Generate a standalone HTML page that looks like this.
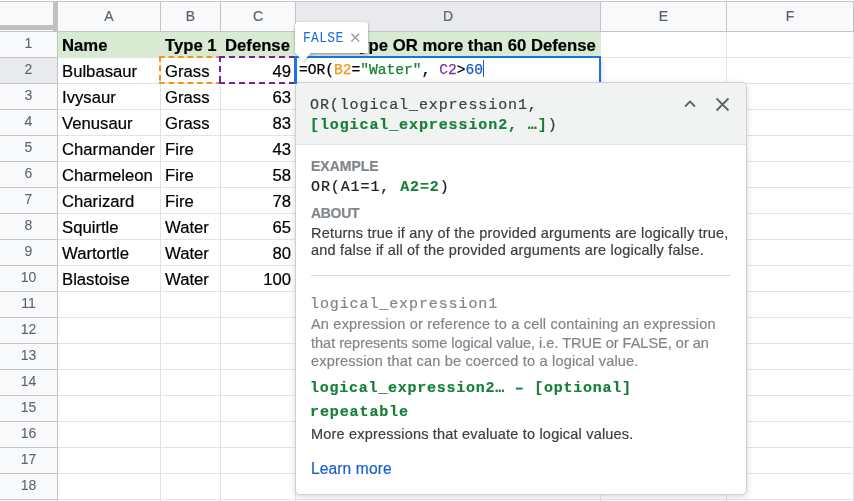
<!DOCTYPE html>
<html><head><meta charset="utf-8">
<style>
*{margin:0;padding:0;box-sizing:border-box}
html,body{width:854px;height:501px;overflow:hidden;background:#fff;font-family:"Liberation Sans",sans-serif}
body{will-change:transform;-webkit-text-stroke:0.2px}
div,span{position:absolute}
.ch{top:2px;height:29px;line-height:29px;text-align:center;font-size:14px;color:#5f6368}
.rn{left:0;width:53px;height:25px;line-height:23px;text-align:center;font-size:14px;color:#5f6368;-webkit-text-stroke:0.05px}
.c{height:25px;font-size:16.7px;color:#000;white-space:nowrap;line-height:28px;padding-left:4px}
.r{text-align:right;padding-left:0;padding-right:4px}
.b{font-weight:bold}
.mono{font-family:"Liberation Mono",monospace}
.pp{left:15px;white-space:nowrap}
</style></head><body>

<div style="left:0;top:0;width:854px;height:1px;background:#fff"></div>
<div style="left:0;top:1px;width:854px;height:1px;background:#c4c4c4"></div>
<div style="left:0;top:2px;width:854px;height:29px;background:#f8f9fa"></div>
<div style="left:0;top:31px;width:854px;height:1px;background:#c4c4c4"></div>
<div style="left:0;top:32px;width:57px;height:469px;background:#f8f9fa"></div>
<div style="left:296px;top:2px;width:304px;height:29px;background:#e8eaed"></div>
<div style="left:0;top:58px;width:57px;height:25px;background:#e8eaed"></div>
<div style="left:58px;top:32px;width:542px;height:25px;background:#d9ead3"></div>
<div style="left:58px;top:57px;width:796px;height:1px;background:#e2e3e3"></div>
<div style="left:0;top:57px;width:57px;height:1px;background:#c4c4c4"></div>
<div style="left:58px;top:83px;width:796px;height:1px;background:#e2e3e3"></div>
<div style="left:0;top:83px;width:57px;height:1px;background:#c4c4c4"></div>
<div style="left:58px;top:109px;width:796px;height:1px;background:#e2e3e3"></div>
<div style="left:0;top:109px;width:57px;height:1px;background:#c4c4c4"></div>
<div style="left:58px;top:135px;width:796px;height:1px;background:#e2e3e3"></div>
<div style="left:0;top:135px;width:57px;height:1px;background:#c4c4c4"></div>
<div style="left:58px;top:161px;width:796px;height:1px;background:#e2e3e3"></div>
<div style="left:0;top:161px;width:57px;height:1px;background:#c4c4c4"></div>
<div style="left:58px;top:187px;width:796px;height:1px;background:#e2e3e3"></div>
<div style="left:0;top:187px;width:57px;height:1px;background:#c4c4c4"></div>
<div style="left:58px;top:213px;width:796px;height:1px;background:#e2e3e3"></div>
<div style="left:0;top:213px;width:57px;height:1px;background:#c4c4c4"></div>
<div style="left:58px;top:239px;width:796px;height:1px;background:#e2e3e3"></div>
<div style="left:0;top:239px;width:57px;height:1px;background:#c4c4c4"></div>
<div style="left:58px;top:265px;width:796px;height:1px;background:#e2e3e3"></div>
<div style="left:0;top:265px;width:57px;height:1px;background:#c4c4c4"></div>
<div style="left:58px;top:291px;width:796px;height:1px;background:#e2e3e3"></div>
<div style="left:0;top:291px;width:57px;height:1px;background:#c4c4c4"></div>
<div style="left:58px;top:317px;width:796px;height:1px;background:#e2e3e3"></div>
<div style="left:0;top:317px;width:57px;height:1px;background:#c4c4c4"></div>
<div style="left:58px;top:343px;width:796px;height:1px;background:#e2e3e3"></div>
<div style="left:0;top:343px;width:57px;height:1px;background:#c4c4c4"></div>
<div style="left:58px;top:369px;width:796px;height:1px;background:#e2e3e3"></div>
<div style="left:0;top:369px;width:57px;height:1px;background:#c4c4c4"></div>
<div style="left:58px;top:395px;width:796px;height:1px;background:#e2e3e3"></div>
<div style="left:0;top:395px;width:57px;height:1px;background:#c4c4c4"></div>
<div style="left:58px;top:421px;width:796px;height:1px;background:#e2e3e3"></div>
<div style="left:0;top:421px;width:57px;height:1px;background:#c4c4c4"></div>
<div style="left:58px;top:447px;width:796px;height:1px;background:#e2e3e3"></div>
<div style="left:0;top:447px;width:57px;height:1px;background:#c4c4c4"></div>
<div style="left:58px;top:473px;width:796px;height:1px;background:#e2e3e3"></div>
<div style="left:0;top:473px;width:57px;height:1px;background:#c4c4c4"></div>
<div style="left:58px;top:499px;width:796px;height:1px;background:#e2e3e3"></div>
<div style="left:0;top:499px;width:57px;height:1px;background:#c4c4c4"></div>
<div style="left:160px;top:32px;width:1px;height:469px;background:#e2e3e3"></div>
<div style="left:160px;top:2px;width:1px;height:29px;background:#c4c4c4"></div>
<div style="left:220px;top:32px;width:1px;height:469px;background:#e2e3e3"></div>
<div style="left:220px;top:2px;width:1px;height:29px;background:#c4c4c4"></div>
<div style="left:295px;top:32px;width:1px;height:469px;background:#e2e3e3"></div>
<div style="left:295px;top:2px;width:1px;height:29px;background:#c4c4c4"></div>
<div style="left:600px;top:32px;width:1px;height:469px;background:#e2e3e3"></div>
<div style="left:600px;top:2px;width:1px;height:29px;background:#c4c4c4"></div>
<div style="left:726px;top:32px;width:1px;height:469px;background:#e2e3e3"></div>
<div style="left:726px;top:2px;width:1px;height:29px;background:#c4c4c4"></div>
<div style="left:853px;top:32px;width:1px;height:469px;background:#e2e3e3"></div>
<div style="left:853px;top:2px;width:1px;height:29px;background:#c4c4c4"></div>
<div style="left:57px;top:2px;width:1px;height:499px;background:#c4c4c4"></div>
<div style="left:53px;top:2px;width:4px;height:29px;background:#c0c0c0"></div>
<div style="left:0;top:25px;width:57px;height:5px;background:#c0c0c0"></div>
<div class="ch" style="left:58px;width:102px">A</div>
<div class="ch" style="left:161px;width:59px">B</div>
<div class="ch" style="left:221px;width:74px">C</div>
<div class="ch" style="left:296px;width:304px">D</div>
<div class="ch" style="left:601px;width:125px">E</div>
<div class="ch" style="left:727px;width:126px">F</div>
<div class="rn" style="top:32px;left:2px">1</div>
<div class="rn" style="top:58px;left:2px">2</div>
<div class="rn" style="top:84px;left:2px">3</div>
<div class="rn" style="top:110px;left:2px">4</div>
<div class="rn" style="top:136px;left:2px">5</div>
<div class="rn" style="top:162px;left:2px">6</div>
<div class="rn" style="top:188px;left:2px">7</div>
<div class="rn" style="top:214px;left:2px">8</div>
<div class="rn" style="top:240px;left:2px">9</div>
<div class="rn" style="top:266px;left:2px">10</div>
<div class="rn" style="top:292px;left:2px">11</div>
<div class="rn" style="top:318px;left:2px">12</div>
<div class="rn" style="top:344px;left:2px">13</div>
<div class="rn" style="top:370px;left:2px">14</div>
<div class="rn" style="top:396px;left:2px">15</div>
<div class="rn" style="top:422px;left:2px">16</div>
<div class="rn" style="top:448px;left:2px">17</div>
<div class="rn" style="top:474px;left:2px">18</div>
<div class="c b" style="left:58px;top:32px">Name</div>
<div class="c b" style="left:161px;top:32px">Type 1</div>
<div class="c b" style="left:221px;top:32px">Defense</div>
<div class="c b" style="left:296px;top:32px">Water Type OR more than 60 Defense</div>
<div class="c" style="left:58px;top:58px">Bulbasaur</div>
<div class="c" style="left:161px;top:58px">Grass</div>
<div class="c r" style="left:221px;width:74px;top:58px">49</div>
<div class="c" style="left:58px;top:84px">Ivysaur</div>
<div class="c" style="left:161px;top:84px">Grass</div>
<div class="c r" style="left:221px;width:74px;top:84px">63</div>
<div class="c" style="left:58px;top:110px">Venusaur</div>
<div class="c" style="left:161px;top:110px">Grass</div>
<div class="c r" style="left:221px;width:74px;top:110px">83</div>
<div class="c" style="left:58px;top:136px">Charmander</div>
<div class="c" style="left:161px;top:136px">Fire</div>
<div class="c r" style="left:221px;width:74px;top:136px">43</div>
<div class="c" style="left:58px;top:162px">Charmeleon</div>
<div class="c" style="left:161px;top:162px">Fire</div>
<div class="c r" style="left:221px;width:74px;top:162px">58</div>
<div class="c" style="left:58px;top:188px">Charizard</div>
<div class="c" style="left:161px;top:188px">Fire</div>
<div class="c r" style="left:221px;width:74px;top:188px">78</div>
<div class="c" style="left:58px;top:214px">Squirtle</div>
<div class="c" style="left:161px;top:214px">Water</div>
<div class="c r" style="left:221px;width:74px;top:214px">65</div>
<div class="c" style="left:58px;top:240px">Wartortle</div>
<div class="c" style="left:161px;top:240px">Water</div>
<div class="c r" style="left:221px;width:74px;top:240px">80</div>
<div class="c" style="left:58px;top:266px">Blastoise</div>
<div class="c" style="left:161px;top:266px">Water</div>
<div class="c r" style="left:221px;width:74px;top:266px">100</div>
<svg style="position:absolute;left:0;top:0" width="854" height="501">
<g fill="none" stroke="#f6931a" stroke-width="2" stroke-dasharray="5.7 3.8"><path d="M159 57H219M159 83H219M160 56V84"/></g>
<g fill="none" stroke="#76219c" stroke-width="2" stroke-dasharray="6 4"><path d="M219 57H294M219 83H294M220 56V84"/></g>
</svg>
<div style="left:297px;top:58px;width:302px;height:24px;background:#fff;box-shadow:2px 2px 5px rgba(0,0,0,0.2)"></div>
<div style="left:294px;top:56px;width:3px;height:28px;background:#1a73e8"></div>
<div style="left:294px;top:56px;width:307px;height:2px;background:#1a73e8"></div>
<div style="left:599px;top:56px;width:2px;height:26px;background:#1a73e8"></div>
<div style="left:297px;top:82px;width:304px;height:1px;background:#c8c8c8"></div>
<div class="mono" style="left:299px;top:58px;height:24px;line-height:24px;font-size:14.6px;color:#000;white-space:nowrap;-webkit-text-stroke:0.25px">=OR(<span style="position:static;color:#f39416">B2</span>=<span style="position:static;color:#15822d">"Water"</span>, <span style="position:static;color:#7f2ea6">C2</span>&gt;<span style="position:static;color:#1659cc">60</span></div>
<div style="left:483px;top:60px;width:1px;height:17px;background:#1a5fd0"></div>
<div style="left:295px;top:22px;width:73px;height:31px;background:#fff;border-radius:3px;box-shadow:0 1px 2px rgba(60,64,67,0.35),0 1px 3px 1px rgba(60,64,67,0.15)"></div>
<svg style="position:absolute;left:0;top:0" width="854" height="501"><path d="M294.5 52 L312 52 L303 61.5 Z" fill="#fff" style="filter:drop-shadow(1px 1px 1px rgba(0,0,0,0.2))"/></svg>
<div style="left:295px;top:49px;width:73px;height:4px;background:#fff"></div>
<div class="mono" style="left:303px;top:28px;height:22px;line-height:22px;font-size:13px;letter-spacing:0.3px;color:#1a6ae0;-webkit-text-stroke:0;transform:scaleY(1.12)">FALSE</div>
<div style="left:348.5px;top:27px;height:22px;line-height:22px;font-size:15px;color:#9aa0a6;-webkit-text-stroke:0">&#x2715;</div>
<div style="left:295px;top:82px;width:452px;height:413px;background:#fff;border:1px solid #cdcfd1;border-radius:5px;box-shadow:0 2px 6px rgba(60,64,67,0.2);overflow:hidden">
<div style="left:0;top:0;width:452px;height:62px;background:#f1f3f3;border-bottom:1px solid #e3e5e6"></div>
</div>
<div style="left:311px;top:275px;width:420px;height:1px;background:#dadce0"></div>
<div class="" style="left:310px;top:96px;line-height:20px;white-space:nowrap;font-family:'Liberation Mono',monospace;font-size:15px;letter-spacing:0.9px;color:#3c4043">OR(logical_expression1,</div>
<div class="" style="left:310px;top:116px;line-height:20px;white-space:nowrap;font-family:'Liberation Mono',monospace;font-size:15px;letter-spacing:0.9px;color:#3c4043"><span style="position:static;color:#188038;font-weight:bold">[logical_expression2, …]</span>)</div>
<div class="" style="left:311px;top:156px;line-height:20px;white-space:nowrap;font-size:14px;font-weight:bold;letter-spacing:0px;color:#80868b">EXAMPLE</div>
<div class="" style="left:311px;top:178px;line-height:20px;white-space:nowrap;font-family:'Liberation Mono',monospace;font-size:15px;letter-spacing:0.9px;color:#202124">OR(A1=1, <span style="position:static;color:#188038;font-weight:bold">A2=2</span>)</div>
<div class="" style="left:311px;top:203px;line-height:20px;white-space:nowrap;font-size:14px;font-weight:bold;letter-spacing:-0.3px;color:#80868b">ABOUT</div>
<div class="" style="left:311px;top:223px;line-height:20px;white-space:nowrap;font-size:14.5px;letter-spacing:0.2px;color:#3c4043">Returns true if any of the provided arguments are logically true,</div>
<div class="" style="left:311px;top:240px;line-height:20px;white-space:nowrap;font-size:14.5px;letter-spacing:0.2px;color:#3c4043">and false if all of the provided arguments are logically false.</div>
<div class="" style="left:310px;top:295px;line-height:20px;white-space:nowrap;font-family:'Liberation Mono',monospace;font-size:15px;letter-spacing:0.9px;color:#80868b">logical_expression1</div>
<div class="" style="left:311px;top:314px;line-height:20px;white-space:nowrap;font-size:14.5px;letter-spacing:0.2px;color:#80868b">An expression or reference to a cell containing an expression</div>
<div class="" style="left:311px;top:333px;line-height:20px;white-space:nowrap;font-size:14.5px;letter-spacing:0.2px;letter-spacing:0px;color:#80868b">that represents some logical value, i.e. TRUE or FALSE, or an</div>
<div class="" style="left:311px;top:351px;line-height:20px;white-space:nowrap;font-size:14.5px;letter-spacing:0.2px;color:#80868b">expression that can be coerced to a logical value.</div>
<div class="" style="left:310px;top:379px;line-height:20px;white-space:nowrap;font-family:'Liberation Mono',monospace;font-size:15px;letter-spacing:0.9px;letter-spacing:0.75px;color:#188038;font-weight:bold">logical_expression2… – [optional]</div>
<div class="" style="left:310px;top:403px;line-height:20px;white-space:nowrap;font-family:'Liberation Mono',monospace;font-size:15px;letter-spacing:0.9px;color:#188038;font-weight:bold">repeatable</div>
<div class="" style="left:311px;top:424px;line-height:20px;white-space:nowrap;font-size:14.5px;letter-spacing:0.2px;color:#3c4043">More expressions that evaluate to logical values.</div>
<div class="" style="left:311px;top:459px;line-height:20px;white-space:nowrap;font-size:15.6px;letter-spacing:0.1px;color:#1b5fd1">Learn more</div>
<svg style="position:absolute;left:0;top:0" width="854" height="501"><path d="M685 106.5 L690 101.5 L695 106.5" fill="none" stroke="#5f6368" stroke-width="1.8"/><path d="M716.5 98.5 L728.5 110.5 M728.5 98.5 L716.5 110.5" fill="none" stroke="#5f6368" stroke-width="1.8"/></svg>
</body></html>
